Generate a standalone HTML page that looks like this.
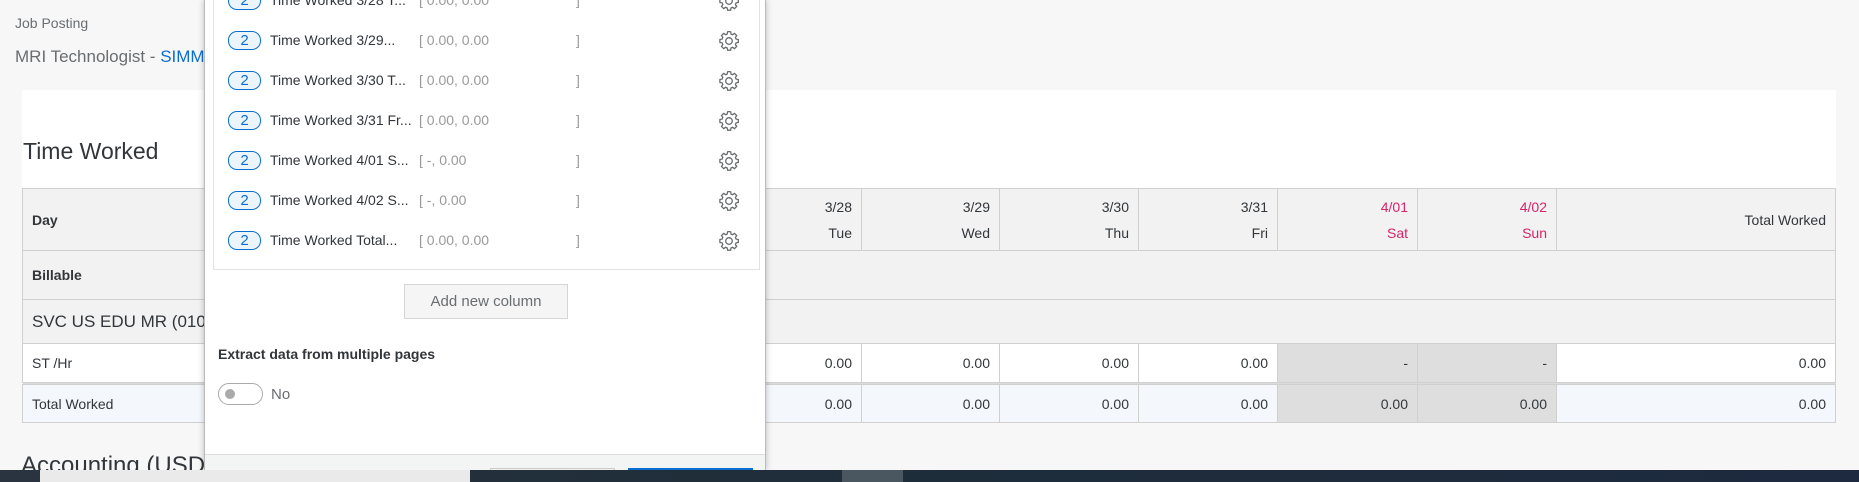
<!DOCTYPE html>
<html><head><meta charset="utf-8"><style>
*{box-sizing:border-box;margin:0;padding:0}
body{width:1859px;height:482px;overflow:hidden;background:#f7f7f7;font-family:"Liberation Sans",sans-serif;color:#32363a;position:relative}
.a{position:absolute;white-space:nowrap}
.card{left:22px;top:90px;width:1814px;height:98px;background:#fff}
table{position:absolute;left:22px;top:188px;width:1814px;border-collapse:collapse;font-size:14px}
td{border:1px solid #d0d0d0;padding:0 9px;text-align:right}
td:first-child{text-align:left}
tr.h td{background:#f2f2f2;height:62px;line-height:26px}
tr.b td{background:#f2f2f2;height:49px}
tr.s td{background:#f2f2f2;height:44px}
tr.st td{background:#fff;height:39px}
tr.sp td{height:2px;background:#dcdcdc;border:none;padding:0}
tr.t td{background:#f4f8fc;height:38px}
td.we{background:#dedede!important}
.pk{color:#d9236b}
.modal{left:204px;top:0;width:562px;height:470px;background:#fff;border-left:1px solid #bbb;border-right:1px solid #bbb;box-shadow:0 0 6px rgba(0,0,0,.25)}
.list{left:8px;top:-2px;width:547px;height:272px;border:1px solid #e3e3e3;background:#fff}
.row{position:absolute;left:0;height:20px;width:540px;font-size:14px}
.badge{position:absolute;left:14px;top:1px;width:33px;height:19px;border:1px solid #0a6ed1;border-radius:9px;background:#ebf5fe;color:#0a6ed1;font-size:15px;text-align:center;line-height:17px}
.lbl{position:absolute;left:56px;top:2px;color:#32363a}
.rng{position:absolute;left:205px;top:2px;color:#9a9a9a}
.br{position:absolute;left:362px;top:2px;color:#9a9a9a}
.gear{position:absolute;left:505px;top:0}
</style></head><body>
<div class="a" style="left:15px;top:15px;font-size:14px;color:#6a6d70">Job Posting</div>
<div class="a" style="left:15px;top:47px;font-size:17px;color:#6a6d70">MRI Technologist - <span style="color:#0a6ed1">SIMMONS</span></div>
<div class="a card"></div>
<div class="a" style="left:23px;top:138px;font-size:23px;color:#32363a">Time Worked</div>
<table>
<tr class="h"><td style="width:700px"><b>Day</b></td><td style="width:139px">3/28<br>Tue</td><td style="width:138px">3/29<br>Wed</td><td style="width:139px">3/30<br>Thu</td><td style="width:139px">3/31<br>Fri</td><td class="pk" style="width:140px">4/01<br>Sat</td><td class="pk" style="width:139px">4/02<br>Sun</td><td>Total Worked</td></tr>
<tr class="b"><td colspan="8" style="text-align:left"><b>Billable</b></td></tr>
<tr class="s"><td colspan="8" style="text-align:left;font-size:17px">SVC US EDU MR (0100)</td></tr>
<tr class="st"><td>ST /Hr</td><td>0.00</td><td>0.00</td><td>0.00</td><td>0.00</td><td class="we">-</td><td class="we">-</td><td>0.00</td></tr>
<tr class="sp"><td colspan="8"></td></tr>
<tr class="t"><td>Total Worked</td><td>0.00</td><td>0.00</td><td>0.00</td><td>0.00</td><td class="we">0.00</td><td class="we">0.00</td><td>0.00</td></tr>
</table>
<div class="a" style="left:21px;top:452px;font-size:24px">Accounting (USD)</div>

<div class="a modal">
 <div class="a list">
  <svg width="0" height="0" style="position:absolute"><defs><g id="g"><path d="M10 1.5l1.6.3.4 2.2 1.6.7 1.9-1.3 2.2 2.2-1.3 1.9.7 1.6 2.2.4v3l-2.2.4-.7 1.6 1.3 1.9-2.2 2.2-1.9-1.3-1.6.7-.4 2.2h-3l-.4-2.2-1.6-.7-1.9 1.3-2.2-2.2 1.3-1.9-.7-1.6-2.2-.4v-3l2.2-.4.7-1.6-1.3-1.9 2.2-2.2 1.9 1.3 1.6-.7.4-2.2z" fill="none" stroke="#6a6d70" stroke-width="1.3"/><circle cx="10" cy="11" r="3.3" fill="none" stroke="#6a6d70" stroke-width="1.3"/></g></defs></svg>
  <div class="row" style="top:-9px"><div class="badge">2</div><div class="lbl">Time Worked 3/28 T...</div><div class="rng">[ 0.00, 0.00</div><div class="br">]</div><svg class="gear" width="22" height="22"><use href="#g"/></svg></div>
  <div class="row" style="top:31px"><div class="badge">2</div><div class="lbl">Time Worked 3/29...</div><div class="rng">[ 0.00, 0.00</div><div class="br">]</div><svg class="gear" width="22" height="22"><use href="#g"/></svg></div>
  <div class="row" style="top:71px"><div class="badge">2</div><div class="lbl">Time Worked 3/30 T...</div><div class="rng">[ 0.00, 0.00</div><div class="br">]</div><svg class="gear" width="22" height="22"><use href="#g"/></svg></div>
  <div class="row" style="top:111px"><div class="badge">2</div><div class="lbl">Time Worked 3/31 Fr...</div><div class="rng">[ 0.00, 0.00</div><div class="br">]</div><svg class="gear" width="22" height="22"><use href="#g"/></svg></div>
  <div class="row" style="top:151px"><div class="badge">2</div><div class="lbl">Time Worked 4/01 S...</div><div class="rng">[ -, 0.00</div><div class="br">]</div><svg class="gear" width="22" height="22"><use href="#g"/></svg></div>
  <div class="row" style="top:191px"><div class="badge">2</div><div class="lbl">Time Worked 4/02 S...</div><div class="rng">[ -, 0.00</div><div class="br">]</div><svg class="gear" width="22" height="22"><use href="#g"/></svg></div>
  <div class="row" style="top:231px"><div class="badge">2</div><div class="lbl">Time Worked Total...</div><div class="rng">[ 0.00, 0.00</div><div class="br">]</div><svg class="gear" width="22" height="22"><use href="#g"/></svg></div>
 </div>
 <div class="a" style="left:199px;top:284px;width:164px;height:35px;border:1px solid #d5d5d5;background:#f5f5f5;color:#6a6d70;font-size:15px;text-align:center;line-height:33px">Add new column</div>
 <div class="a" style="left:13px;top:346px;font-size:14px;font-weight:bold;color:#32363a">Extract data from multiple pages</div>
 <div class="a" style="left:13px;top:383px;width:45px;height:22px;border:1px solid #aaa;border-radius:11px;background:#fff"><div style="position:absolute;left:6px;top:5px;width:10px;height:10px;border-radius:50%;background:#aaa"></div></div>
 <div class="a" style="left:66px;top:386px;font-size:15px;color:#6a6d70">No</div>
 <div class="a" style="left:0;top:454px;width:560px;height:16px;background:#f3f4f4;border-top:1px solid #ddd"></div>
 <div class="a" style="left:285px;top:468px;width:125px;height:4px;background:#f0f0f0;border:1px solid #ccc"></div>
 <div class="a" style="left:423px;top:468px;width:125px;height:4px;background:#0a6ed1"></div>
</div>

<div class="a" style="left:0;top:470px;width:1859px;height:12px;background:linear-gradient(90deg,#2a3440,#1f2e3a 40%,#1d2a3f 100%)"></div>
<div class="a" style="left:40px;top:470px;width:430px;height:12px;background:#eaeaea"></div>
<div class="a" style="left:842px;top:470px;width:61px;height:12px;background:#4a5660"></div>
</body></html>
